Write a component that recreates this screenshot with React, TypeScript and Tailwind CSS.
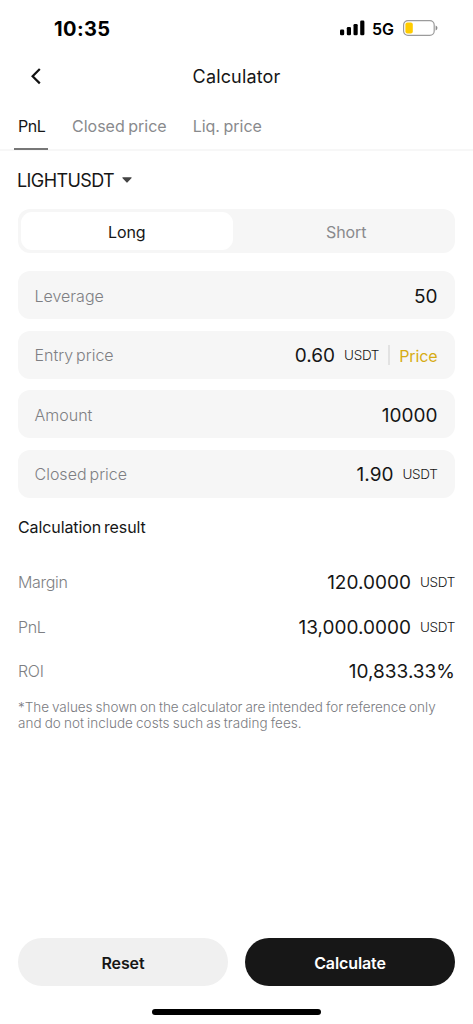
import { useState } from 'react';

const tabs = ['PnL', 'Closed price', 'Liq. price'];

const results = [
    { label: 'Margin', value: '120.0000', unit: 'USDT' },
    { label: 'PnL', value: '13,000.0000', unit: 'USDT' },
    { label: 'ROI', value: '10,833.33%', unit: '' },
];

function StatusBar() {
    return (
        <div className="flex h-14 items-center justify-between pl-[54px] pr-[35px]">
            <span className="mt-px text-[20px] font-bold leading-6 tracking-[0.4px] text-black">10:35</span>
            <div className="flex items-center">
                <svg width="25" height="16" viewBox="0 0 25 16" fill="#000">
                    <rect x="0" y="9.5" width="4.2" height="5.8" rx="1.3" />
                    <rect x="6.8" y="7" width="4.2" height="8.3" rx="1.3" />
                    <rect x="13.5" y="4" width="4.2" height="11.3" rx="1.3" />
                    <rect x="20.2" y="0.5" width="4.2" height="14.8" rx="1.3" />
                </svg>
                <span className="ml-[7px] mt-0.5 w-[23px] text-[16px] font-semibold leading-5 text-black">5G</span>
                <svg className="ml-2" width="35" height="16" viewBox="0 0 35 16" fill="none">
                    <rect x="0.6" y="0.6" width="30.6" height="14.8" rx="4.4" stroke="#9b9b9b" strokeWidth="1.2" />
                    <rect x="2.4" y="2.6" width="7.4" height="10.8" rx="2" fill="#fc0" />
                    <path d="M32.6 5.6c1.2.4 1.8 1.3 1.8 2.4s-.6 2-1.8 2.4z" fill="#8a8a8a" />
                </svg>
            </div>
        </div>
    );
}

function Amount({ value, unit }: { value: string; unit?: string }) {
    return (
        <>
            <span className="pt-[3px] text-[19px] leading-6 text-[#161616]">{value}</span>
            {unit && (
                <span className="ml-[9px] pt-px text-[13.5px] font-light tracking-[-0.3px] text-[#161616]">{unit}</span>
            )}
        </>
    );
}

function Field({ label, value, unit, action }: { label: string; value: string; unit?: string; action?: string }) {
    return (
        <div className="flex h-12 items-center justify-between rounded-[12px] bg-[#f6f6f6] pl-[16.5px] pr-[17.5px]">
            <span className="pt-px text-[16px] font-light text-[#7e7f83] [word-spacing:-1.5px]">{label}</span>
            <div className="flex items-center">
                <Amount value={value} unit={unit} />
                {action && (
                    <>
                        <span className="ml-[9px] h-5 w-0.5 bg-[#e2e2e2]" />
                        <button className="ml-[9px] pt-0.5 text-[16px] tracking-[-0.1px] text-[#d6ac13]">{action}</button>
                    </>
                )}
            </div>
        </div>
    );
}

export default function App() {
    const [tab, setTab] = useState('PnL');
    const [side, setSide] = useState('Long');

    return (
        <div className="flex h-screen flex-col overflow-hidden bg-white font-['Inter',sans-serif] text-[#161616]">
            <StatusBar />

            {/* Header */}
            <div className="grid h-10 grid-cols-[54px_1fr_54px] items-center">
                <button className="flex justify-center pl-[18px]">
                    <svg width="12" height="18" viewBox="0 0 12 18" fill="none" stroke="#111" strokeWidth="2.2">
                        <path d="M9.8 2 2.6 9.2l7.2 7.2" />
                    </svg>
                </button>
                <h1 className="text-center text-[18px] tracking-[0.15px]">Calculator</h1>
            </div>

            {/* Tabs */}
            <div className="flex h-[55px] gap-[18px] border-b-2 border-[#f7f7f7] px-3.5">
                {tabs.map((item) => (
                    <button
                        key={item}
                        onClick={() => setTab(item)}
                        className={`-mb-px flex items-center border-b-2 px-1 pt-2 text-[16px] first:mr-0.5 first:w-[34px] first:tracking-[-0.5px] [word-spacing:-1px] ${
                            tab === item ? 'border-[#777] text-[#161616]' : 'border-transparent text-[#898a8d]'
                        }`}
                    >
                        {item}
                    </button>
                ))}
            </div>

            <div className="flex flex-1 flex-col px-[18px]">
                {/* Symbol */}
                <button className="mt-[15px] -ml-px flex h-7 items-center gap-2 text-[18px] tracking-[-0.6px]">
                    LIGHTUSDT
                    <svg width="10" height="6" viewBox="0 0 10 6" fill="#444">
                        <path d="M1 .3h8c.6 0 .8.6.4 1L5.6 5.3a.8.8 0 0 1-1.2 0L.6 1.3C.2.9.4.3 1 .3z" />
                    </svg>
                </button>

                {/* Long / Short */}
                <div className="mt-[15px] flex h-11 rounded-[12px] bg-[#f6f6f6] p-[3px]">
                    {['Long', 'Short'].map((item) => (
                        <button
                            key={item}
                            onClick={() => setSide(item)}
                            className={`flex-1 rounded-[11px] pt-0.5 text-[16px] tracking-[-0.1px] ${
                                side === item ? 'bg-white text-[#161616]' : 'pl-2 text-[#898a8d]'
                            }`}
                        >
                            {item}
                        </button>
                    ))}
                </div>

                <div className="mt-[18px] flex flex-col gap-[11.6px]">
                    <Field label="Leverage" value="50" />
                    <Field label="Entry price" value="0.60" unit="USDT" action="Price" />
                    <Field label="Amount" value="10000" />
                    <Field label="Closed price" value="1.90" unit="USDT" />
                </div>

                {/* Result */}
                <h2 className="mt-[17.5px] text-[16px] leading-6 tracking-[-0.1px] [word-spacing:-1.5px]">
                    Calculation result
                </h2>
                <div className="mt-[20.5px]">
                    {results.map((row) => (
                        <div key={row.label} className="flex h-[44.4px] items-center justify-between">
                            <span className="pt-px text-[16px] font-light tracking-[-0.3px] text-[#7e7f83]">
                                {row.label}
                            </span>
                            <div className="flex items-center">
                                <Amount value={row.value} unit={row.unit} />
                            </div>
                        </div>
                    ))}
                </div>
                <p className="mt-[6px] whitespace-nowrap text-[13.5px] font-light leading-[16.5px] tracking-[-0.03px] text-[#7a7b7f] [word-spacing:-0.75px]">
                    *The values shown on the calculator are intended for reference only
                    <br />
                    <span className="tracking-[0.03px]">and do not include costs such as trading fees.</span>
                </p>

                {/* Actions */}
                <div className="mt-auto mb-[23px] flex h-12 gap-[17px] text-[16px] font-semibold">
                    <button className="flex-1 rounded-full bg-[#f0f0f0] pt-0.5 tracking-[-0.1px]">Reset</button>
                    <button className="flex-1 rounded-full bg-[#171717] pt-0.5 tracking-[-0.1px] text-white">
                        Calculate
                    </button>
                </div>
            </div>

            <div className="mx-auto mb-[9px] h-1.5 w-[169px] shrink-0 rounded-full bg-black" />
        </div>
    );
}
